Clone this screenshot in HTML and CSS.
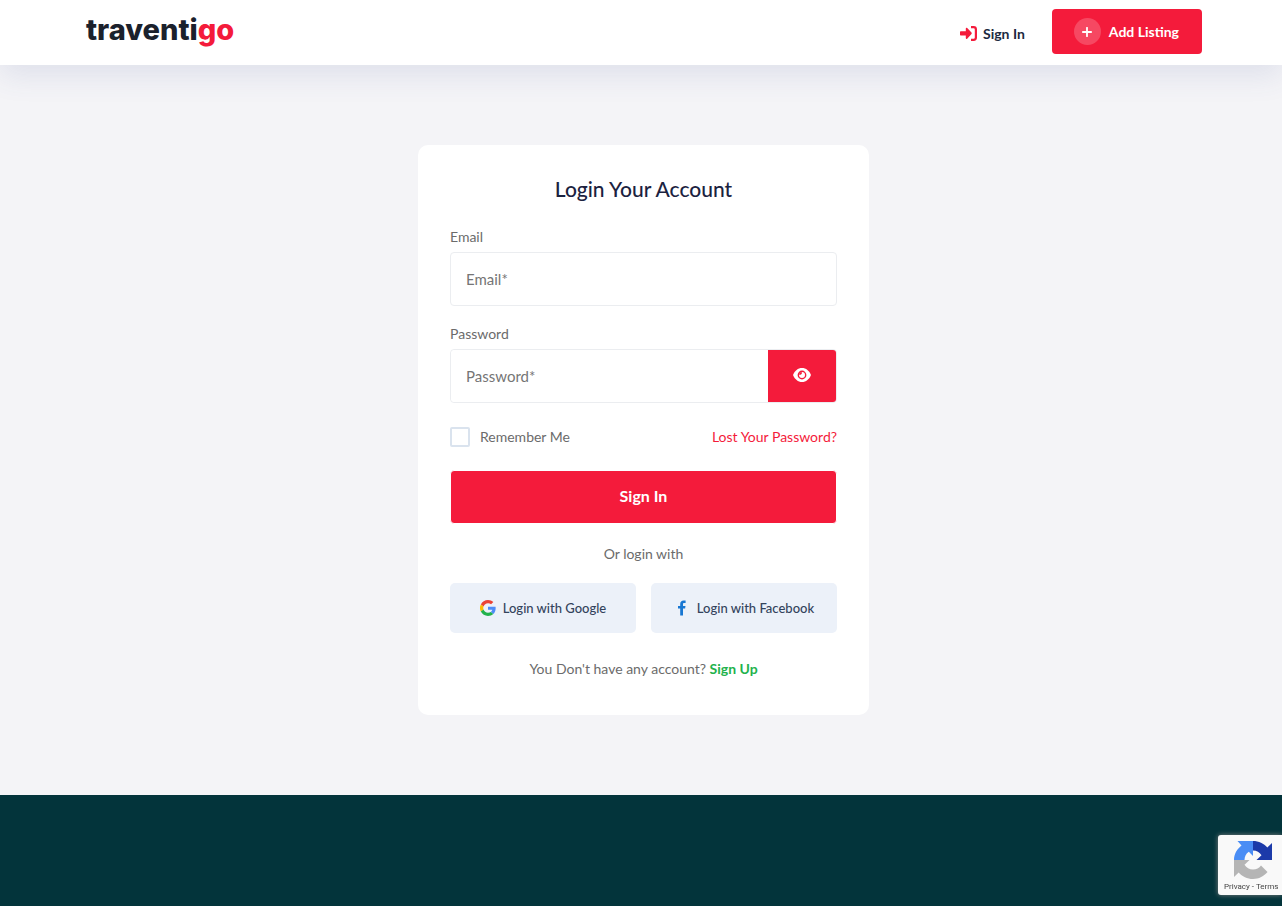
FILE: index.html
```html
<!DOCTYPE html>
<html lang="en">
<head>
    <meta charset="utf-8">
    <meta name="viewport" content="width=device-width, initial-scale=1">
    <title>Traventigo - Login</title>
    <link rel="stylesheet" href="styles.css">
</head>
<body>
    <header class="header">
        <a href="#" class="logo">traventi<span class="logo-accent">go</span></a>
        <nav class="nav">
            <a href="#" class="nav-link">
                <svg width="17" height="15" viewBox="0 0 17 15" aria-hidden="true">
                    <path d="M1 5.3h4.8V2.6c0-.9.8-1.1 1.4-.6l4.300 4.600c.4.5.4 1 0 1.500l-4.300 4.600c-.6.5-1.400.3-1.400-.6V9.600H1c-.6 0-1-.4-1-1V6.300c0-.6.4-1 1-1z" fill="#f41b3b"/>
                    <path d="M11 1.200h2.600c1.400 0 2.300.9 2.300 2.300v8c0 1.400-.9 2.300-2.300 2.300H11" fill="none" stroke="#f41b3b" stroke-width="2.200"/>
                </svg>
                Sign In
            </a>
            <a href="#" class="add-listing">
                <span class="plus">
                    <svg width="10" height="10" viewBox="0 0 10 10" aria-hidden="true">
                        <path d="M5 .8v8.400M.8 5h8.400" stroke="#fff" stroke-width="1.800" stroke-linecap="round"/>
                    </svg>
                </span>
                Add Listing
            </a>
        </nav>
    </header>

    <main class="main">
        <form class="card">
            <h1 class="title">Login Your Account</h1>

            <label class="label" for="email">Email</label>
            <input class="input" type="email" id="email" placeholder="Email*">

            <label class="label" for="password">Password</label>
            <div class="password-box">
                <input class="input" type="password" id="password" placeholder="Password*">
                <button type="button" class="eye" aria-label="Show password">
                    <svg width="18" height="14" viewBox="0 0 18 14" aria-hidden="true">
                        <path d="M0 7C1.700 2.700 5 0 9 0s7.300 2.700 9 7c-1.700 4.300-5 7-9 7S1.700 11.300 0 7z" fill="#fff"/>
                        <circle cx="9" cy="7" r="3.700" fill="none" stroke="#f41b3b" stroke-width="1.400"/>
                        <path d="M9 4.300A2.700 2.700 0 0 1 6.300 7V4.300z" fill="#f41b3b"/>
                    </svg>
                </button>
            </div>

            <div class="options">
                <label class="remember"><input type="checkbox" class="checkbox">Remember Me</label>
                <a href="#" class="lost">Lost Your Password?</a>
            </div>

            <button type="submit" class="submit">Sign In</button>

            <p class="or">Or login with</p>
            <div class="socials">
                <button type="button" class="social">
                    <svg width="16" height="16" viewBox="0 0 48 48" aria-hidden="true">
                        <path fill="#ea4335" d="M24 9.500c3.500 0 6.700 1.200 9.200 3.600l6.900-6.900C35.900 2.400 30.500 0 24 0 14.600 0 6.500 5.400 2.600 13.200l8 6.200C12.400 13.700 17.700 9.500 24 9.500z"/>
                        <path fill="#4e8cf7" d="M47 24.600c0-1.600-.2-3.100-.4-4.600H24v9h12.900c-.6 3-2.200 5.500-4.700 7.200l7.700 6C44.400 38 47 31.800 47 24.600z"/>
                        <path fill="#fbbc05" d="M10.500 28.600a14.500 14.500 0 0 1 0-9.200l-8-6.200a24 24 0 0 0 0 21.600z"/>
                        <path fill="#22b24c" d="M24 48c6.500 0 11.900-2.100 15.900-5.800l-7.700-6c-2.200 1.500-4.900 2.300-8.200 2.300-6.300 0-11.600-4.200-13.500-9.900l-8 6.200C6.500 42.600 14.600 48 24 48z"/>
                    </svg>
                    Login with Google
                </button>
                <button type="button" class="social">
                    <svg width="16" height="16" viewBox="0 0 16 16" aria-hidden="true">
                        <path fill="#1877d2" d="M6.200 15.500V8.600H4V5.900h2.200V4c0-2.300 1.300-3.600 3.500-3.600.9 0 1.600.1 1.900.1v2.400h-1.300c-1 0-1.300.5-1.300 1.300v1.700h2.500l-.4 2.700H9v6.900z"/>
                    </svg>
                    Login with Facebook
                </button>
            </div>

            <p class="signup">You Don't have any account? <a href="#" class="signup-link">Sign Up</a></p>
        </form>
    </main>

    <footer class="footer"></footer>

    <aside class="recaptcha">
        <svg width="38" height="38" viewBox="0 0 38 38" aria-hidden="true">
            <path fill="#1c3aa9" d="M19 0c5.800 0 10.800 2.500 14.300 6.500L38 2v17H22.500l5-4.800C25.500 11.300 22.800 9.700 19 9.600z"/>
            <path fill="#4a8df5" d="M19 0H3.500l4 4.500C3 8 0 13 0 19h10.500c.1-3.800 1.500-6.500 4.300-8.300L19 15z"/>
            <path fill="#b5b5b5" d="M0 19v17l4.700-4.500C8.200 35.500 13.200 38 19 38c6 0 11-2.800 14.500-7L27 24.500c-1.800 2.500-4.500 4-8 4-3.700 0-6.500-1.500-8.500-4.700L15.500 19z"/>
        </svg>
        <div class="recaptcha-links"><a href="#">Privacy</a> - <a href="#">Terms</a></div>
    </aside>
</body>
</html>
```
FILE: styles.css
```css
* {
    box-sizing: border-box;
}
body {
    margin: 0;
    min-height: 100vh;
    display: flex;
    flex-direction: column;
    font-family: Lato, "Open Sans", sans-serif;
    font-size: 14px;
    line-height: 24px;
    color: #6b6b6b;
    background: #f4f4f7;
}
a {
    color: inherit;
    text-decoration: none;
}
button {
    font-family: inherit;
    border: 0;
    cursor: pointer;
}
svg {
    display: block;
    flex-shrink: 0;
}

/* header */
.header {
    display: flex;
    justify-content: space-between;
    align-items: center;
    height: 65px;
    padding: 0 80px 2px 86px;
    background: #fff;
    box-shadow: 0 10px 30px rgba(65, 80, 148, 0.12);
}
.logo {
    font-family: Inter, sans-serif;
    font-size: 29px;
    font-weight: 800;
    line-height: 32px;
    padding-bottom: 4px;
    color: #1b212c;
}
.logo-accent {
    color: #f41b3b;
}
.nav {
    display: flex;
    align-items: center;
    gap: 27px;
}
.nav-link {
    display: flex;
    align-items: center;
    gap: 6px;
    padding-top: 4px;
    font-weight: 700;
    color: #1b2a41;
}
.add-listing {
    display: flex;
    align-items: center;
    gap: 8px;
    height: 45px;
    padding: 0 23px 0 22px;
    border-radius: 4px;
    background: #f41b3b;
    color: #fff;
    font-weight: 700;
}
.plus {
    display: flex;
    align-items: center;
    justify-content: center;
    width: 27px;
    height: 27px;
    border-radius: 50%;
    background: rgba(255, 255, 255, 0.2);
}

/* login card */
.main {
    padding: 80px 15px 80px 20px;
}
.card {
    max-width: 451px;
    margin: 0 auto;
    padding: 30px 32px 34px;
    border-radius: 10px;
    background: #fff;
}
.title {
    margin: 0 0 22px;
    font-size: 21px;
    font-weight: 500;
    line-height: 28px;
    text-align: center;
    color: #1b2240;
}
.label {
    display: block;
    margin-bottom: 3px;
}
.input {
    display: block;
    width: 100%;
    height: 54px;
    margin-bottom: 16px;
    padding: 0 15px;
    border: 1px solid #ebedf0;
    border-radius: 4px;
    background: #fff;
    font-family: inherit;
    font-size: 15px;
    color: #444;
}
.input::placeholder {
    color: #757575;
}
.password-box {
    display: flex;
    height: 54px;
    margin-bottom: 22px;
    border: 1px solid #ebedf0;
    border-radius: 4px;
}
.password-box .input {
    flex: 1;
    min-width: 0;
    height: 52px;
    margin: 0;
    border: 0;
}
.eye {
    display: flex;
    align-items: center;
    justify-content: center;
    width: 68px;
    padding: 0 0 2px;
    border-radius: 0 3px 3px 0;
    background: #f41b3b;
}
.options {
    display: flex;
    justify-content: space-between;
    align-items: center;
    margin-bottom: 21px;
}
.remember {
    display: flex;
    align-items: center;
    gap: 10px;
}
.checkbox {
    appearance: none;
    width: 20px;
    height: 20px;
    margin: 0;
    border: 2px solid #dae3ee;
    border-radius: 2px;
    background: #fff;
}
.checkbox:checked {
    background: #f41b3b;
}
.lost {
    color: #f41b3b;
}
.submit {
    display: block;
    width: 100%;
    height: 54px;
    padding: 0 0 3px;
    border: 1px solid #fff;
    border-radius: 4px;
    background: #f41b3b;
    color: #fff;
    font-size: 16px;
    font-weight: 700;
}
.or {
    margin: 18px 0 17px;
    text-align: center;
}
.socials {
    display: grid;
    grid-template-columns: 1fr 1fr;
    gap: 15px;
}
.social {
    display: flex;
    align-items: center;
    justify-content: center;
    gap: 7px;
    height: 50px;
    padding: 0;
    border-radius: 5px;
    background: #ecf1f9;
    color: #33435c;
    font-size: 13px;
    font-weight: 500;
}
.signup {
    margin: 24px 0 0;
    text-align: center;
}
.signup-link {
    color: #22b24c;
    font-weight: 700;
}

/* footer */
.footer {
    flex: 1;
    min-height: 111px;
    background: #03343b;
}
.recaptcha {
    position: fixed;
    right: 0;
    bottom: 11px;
    width: 64px;
    height: 60px;
    padding: 6px 0 0 6px;
    border-radius: 3px 0 0 3px;
    background: #f9f9f9;
    box-shadow: 0 0 5px gray;
}
.recaptcha svg {
    margin-left: 10px;
}
.recaptcha-links {
    font-family: Roboto, sans-serif;
    font-size: 8px;
    line-height: 16px;
    white-space: nowrap;
    color: #444;
}
```
